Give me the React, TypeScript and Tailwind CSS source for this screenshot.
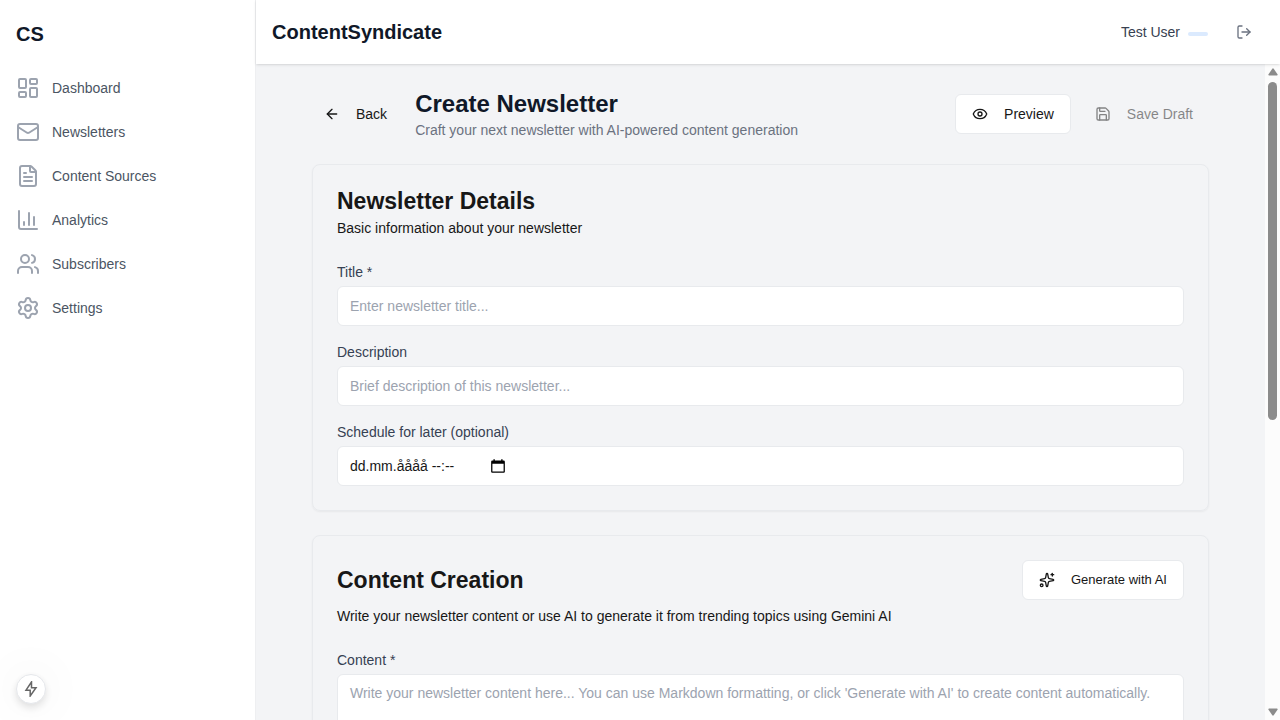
import type { ReactNode } from "react";
import {
  ArrowLeft,
  ChartColumn,
  Eye,
  FileText,
  LayoutDashboard,
  LogOut,
  Mail,
  Save,
  Settings,
  Sparkles,
  Users,
} from "lucide-react";

const navItems = [
  { label: "Dashboard", icon: LayoutDashboard },
  { label: "Newsletters", icon: Mail },
  { label: "Content Sources", icon: FileText },
  { label: "Analytics", icon: ChartColumn },
  { label: "Subscribers", icon: Users },
  { label: "Settings", icon: Settings },
];

const fieldClass =
  "block w-full rounded-md border border-[#e8eaed] bg-white px-3 py-2 text-sm text-neutral-900 placeholder:text-[#9ca3af]";

function Field({ id, label, children }: { id: string; label: string; children: ReactNode }) {
  return (
    <div className="flex flex-col gap-1">
      <label htmlFor={id} className="text-sm text-gray-700">
        {label}
      </label>
      {children}
    </div>
  );
}

function Sidebar() {
  return (
    <aside className="flex w-64 shrink-0 flex-col border-r border-[#eeeff1] bg-white">
      <div className="flex h-16 items-center px-4 pt-1">
        <span className="text-xl font-bold text-gray-900">CS</span>
      </div>
      <nav className="flex flex-col gap-1 px-2 pt-1">
        {navItems.map(({ label, icon: Icon }) => (
          <a
            key={label}
            href="#"
            className="flex h-10 items-center gap-3 rounded-md px-2 text-sm text-[#4b5563]"
          >
            <Icon className="size-6 text-[#9ca3af]" />
            {label}
          </a>
        ))}
      </nav>
    </aside>
  );
}

function Header() {
  return (
    <header className="z-10 flex h-16 shrink-0 items-center justify-between bg-white pr-7 pl-4 shadow-sm">
      <h1 className="text-xl font-semibold text-gray-900">ContentSyndicate</h1>
      <div className="flex items-center">
        <span className="text-sm text-[#374151]">Test User</span>
        <span className="mt-1 ml-2 h-1 w-5 rounded-full bg-blue-100" />
        <button type="button" aria-label="Log out" className="ml-7 text-[#6b7280]">
          <LogOut className="size-4" />
        </button>
      </div>
    </header>
  );
}

function ScrollArrow() {
  return (
    <svg viewBox="0 0 10 8" className="h-2 w-2.5 shrink-0 fill-[#8b8b8b]">
      <path d="M4.3.8a.9.9 0 0 1 1.4 0l3.8 5.400c.4.6.1 1.300-.7 1.300H1.200C.4 7.500.1 6.800.5 6.200z" />
    </svg>
  );
}

function ScrollTrack() {
  return (
    <div aria-hidden="true" className="flex w-[15px] shrink-0 flex-col items-center bg-[#fcfcfc] py-1">
      <ScrollArrow />
      <div className="mt-1.5 flex w-[9px] grow flex-col">
        <div className="h-[54%] rounded-full bg-[#8b8b8b]" />
      </div>
      <div className="rotate-180">
        <ScrollArrow />
      </div>
    </div>
  );
}

function DetailsCard() {
  return (
    <section className="rounded-lg border border-[#e8eaed] p-6 shadow-xs">
      <h3 className="text-[23px] leading-6 font-semibold text-neutral-900">Newsletter Details</h3>
      <p className="mt-[5px] text-sm text-neutral-900">Basic information about your newsletter</p>
      <div className="mt-6 flex flex-col gap-4">
        <Field id="title" label="Title *">
          <input id="title" type="text" placeholder="Enter newsletter title..." className={`${fieldClass} h-10`} />
        </Field>
        <Field id="description" label="Description">
          <input
            id="description"
            type="text"
            placeholder="Brief description of this newsletter..."
            className={`${fieldClass} h-10`}
          />
        </Field>
        <Field id="schedule" label="Schedule for later (optional)">
          <div className="flex h-10 items-center rounded-md border border-[#e8eaed] bg-white px-3">
            <input
              id="schedule"
              type="text"
              placeholder="dd.mm.åååå --:--"
              className="w-[140px] text-sm placeholder:text-neutral-900"
            />
            <button type="button" aria-label="Open calendar">
              <svg viewBox="0 0 14 14" className="size-4 fill-black">
                <path d="M3 1h1.200v1.200h5.600V1H11v1.200h1a1 1 0 0 1 1 1V12a1 1 0 0 1-1 1H2a1 1 0 0 1-1-1V3.200a1 1 0 0 1 1-1h1zM2.100 5v6.900h9.800V5z" />
              </svg>
            </button>
          </div>
        </Field>
      </div>
    </section>
  );
}

function ContentCard() {
  return (
    <section className="rounded-lg border border-[#e8eaed] p-6 shadow-xs">
      <div className="flex items-center justify-between">
        <h3 className="text-[23px] leading-6 font-semibold text-neutral-900">Content Creation</h3>
        <button
          type="button"
          className="flex h-10 items-center gap-4 rounded-md border border-[#e8eaed] bg-white px-4 text-[13px] text-neutral-900"
        >
          <Sparkles className="size-4" />
          Generate with AI
        </button>
      </div>
      <p className="mt-1.5 text-sm text-neutral-900">
        Write your newsletter content or use AI to generate it from trending topics using Gemini AI
      </p>
      <div className="mt-6">
        <Field id="content" label="Content *">
          <textarea
            id="content"
            rows={20}
            placeholder="Write your newsletter content here... You can use Markdown formatting, or click 'Generate with AI' to create content automatically."
            className={`${fieldClass} resize-none`}
          />
        </Field>
      </div>
    </section>
  );
}

export default function App() {
  return (
    <div className="flex h-screen overflow-hidden bg-[#f3f4f6] font-['Liberation_Sans',Arial,sans-serif]">
      <Sidebar />
      <div className="flex min-w-0 grow flex-col">
        <Header />
        <div className="flex min-h-0 grow">
          <main className="min-w-0 grow overflow-y-auto px-14 py-6 [scrollbar-width:none]">
            <div className="flex items-center justify-between">
              <div className="flex items-center gap-4">
                <button type="button" className="flex h-10 items-center gap-4 px-3 text-sm text-neutral-900">
                  <ArrowLeft className="size-4" />
                  Back
                </button>
                <div>
                  <h2 className="text-2xl font-bold text-gray-900">Create Newsletter</h2>
                  <p className="text-sm text-[#6b7280]">Craft your next newsletter with AI-powered content generation</p>
                </div>
              </div>
              <div className="flex items-center gap-2">
                <button
                  type="button"
                  className="flex h-10 items-center gap-4 rounded-md border border-[#e8eaed] bg-white px-4 text-sm text-neutral-900"
                >
                  <Eye className="size-4" />
                  Preview
                </button>
                <button
                  type="button"
                  disabled
                  className="flex h-10 items-center gap-4 px-4 text-sm text-neutral-900 opacity-50"
                >
                  <Save className="size-4" />
                  Save Draft
                </button>
              </div>
            </div>
            <div className="mt-6 flex flex-col gap-6">
              <DetailsCard />
              <ContentCard />
            </div>
          </main>
          <ScrollTrack />
        </div>
      </div>
      <button
        type="button"
        aria-label="Quick actions"
        className="fixed bottom-4 left-4 flex size-[30px] items-center justify-center rounded-full border border-gray-200 bg-white shadow-[0_4px_8px_rgba(0,0,0,0.12),0_0_48px_rgba(0,0,0,0.08)]"
      >
        <svg viewBox="0 0 16 16" className="size-4 fill-none stroke-[#666] stroke-[1.5]">
          <path d="M8.500 1 3 9.200h4.200V15L13 6.800H8.500z" />
        </svg>
      </button>
    </div>
  );
}
